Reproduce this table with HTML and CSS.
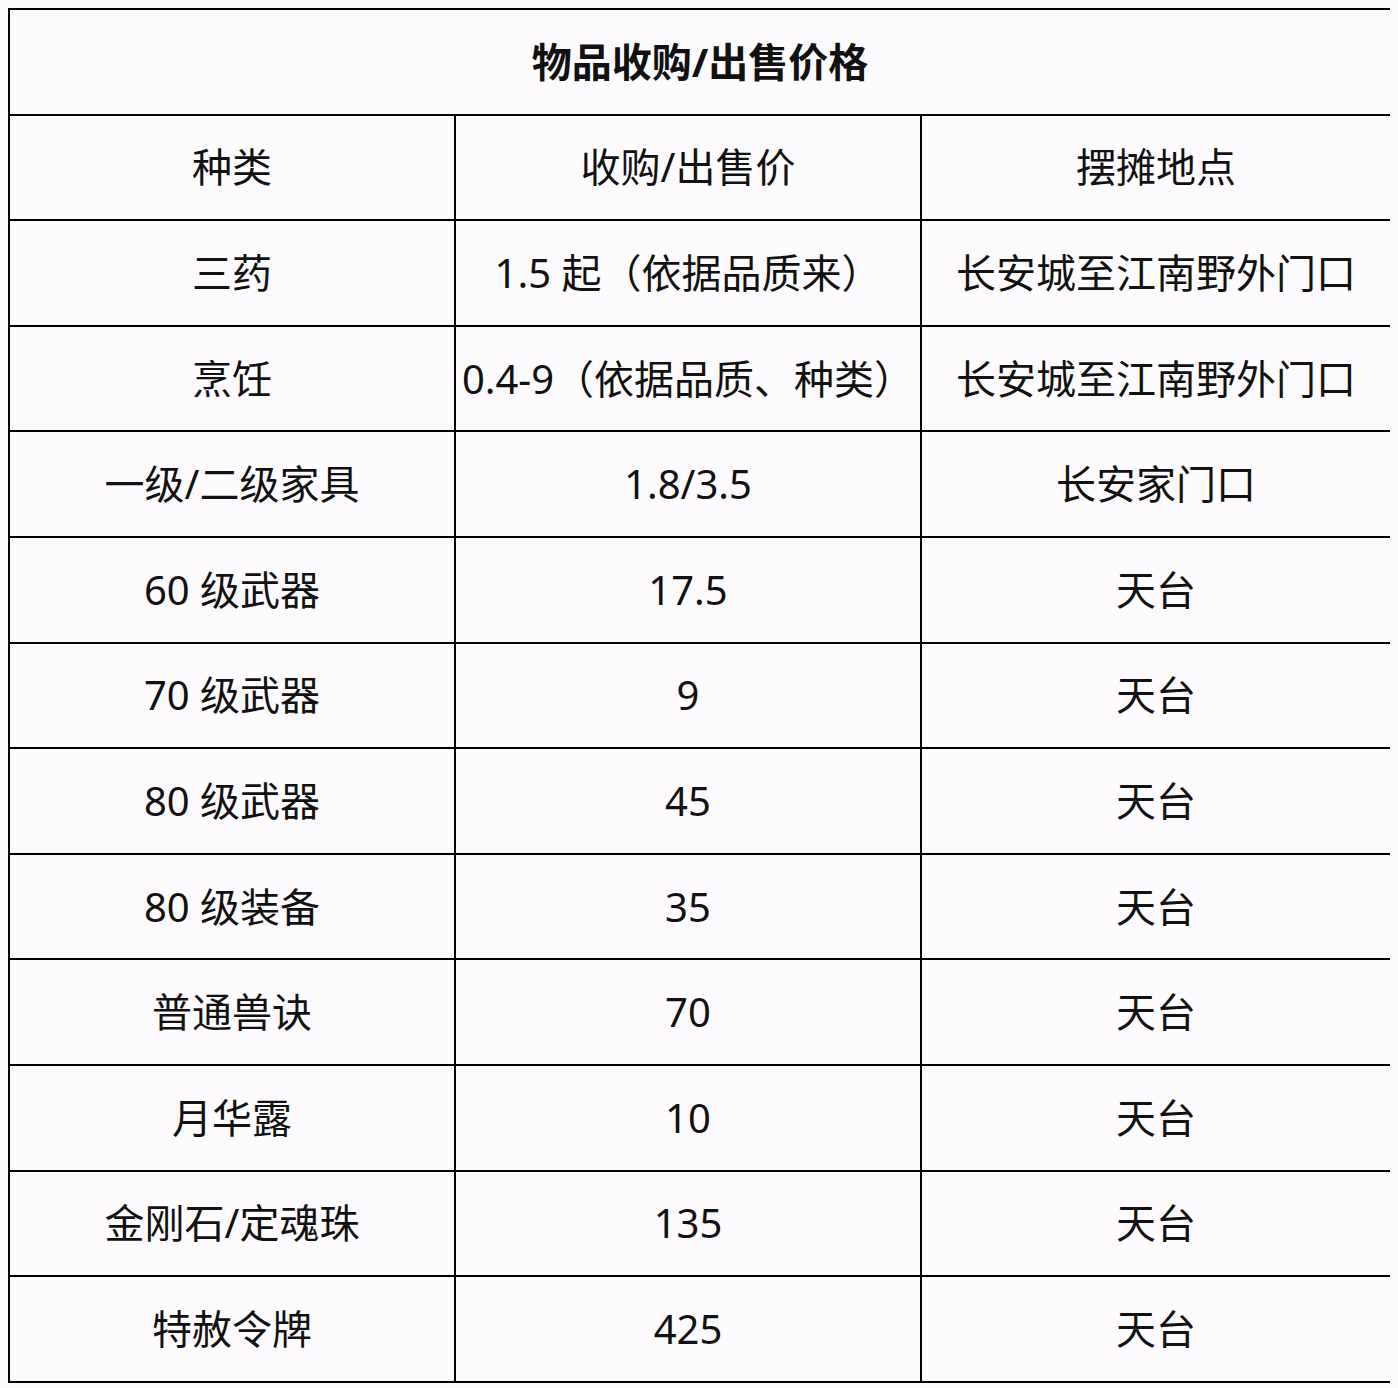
FILE: index.html
```html
<!DOCTYPE html>
<html lang="zh-CN">
<head>
<meta charset="utf-8">
<title>物品收购/出售价格</title>
<link rel="stylesheet" href="styles.css">
</head>
<body>
<table class="price-table">
  <colgroup>
    <col class="col-kind">
    <col class="col-price">
    <col class="col-place">
  </colgroup>
  <thead>
    <tr class="title-row"><th colspan="3">物品收购/出售价格</th></tr>
  </thead>
  <tbody>
    <tr><td>种类</td><td>收购/出售价</td><td>摆摊地点</td></tr>
    <tr><td>三药</td><td>1.5 起（依据品质来）</td><td>长安城至江南野外门口</td></tr>
    <tr><td>烹饪</td><td>0.4-9（依据品质、种类）</td><td>长安城至江南野外门口</td></tr>
    <tr><td>一级/二级家具</td><td>1.8/3.5</td><td>长安家门口</td></tr>
    <tr><td>60 级武器</td><td>17.5</td><td>天台</td></tr>
    <tr><td>70 级武器</td><td>9</td><td>天台</td></tr>
    <tr><td>80 级武器</td><td>45</td><td>天台</td></tr>
    <tr><td>80 级装备</td><td>35</td><td>天台</td></tr>
    <tr><td>普通兽诀</td><td>70</td><td>天台</td></tr>
    <tr><td>月华露</td><td>10</td><td>天台</td></tr>
    <tr><td>金刚石/定魂珠</td><td>135</td><td>天台</td></tr>
    <tr><td>特赦令牌</td><td>425</td><td>天台</td></tr>
  </tbody>
</table>
</body>
</html>
```
FILE: styles.css
```css
html, body {
  background: #fdfbfd;
}
body {
  margin: 8px;
}
.price-table {
  border-collapse: collapse;
  table-layout: fixed;
  width: 1382px;
  font-family: "Noto Sans", "Noto Sans CJK SC", sans-serif;
  color: #111;
}
.col-kind { width: 446px; }
.col-price { width: 466px; }
.col-place { width: 470px; }
.price-table th,
.price-table td {
  border: 2px solid #000;
  height: 103.6px;
  padding: 0;
  text-align: center;
  vertical-align: middle;
  font-size: 40px;
  font-weight: 400;
  line-height: 1;
  white-space: nowrap;
}
.title-row th {
  font-size: 40px;
  font-weight: 700;
}
```
